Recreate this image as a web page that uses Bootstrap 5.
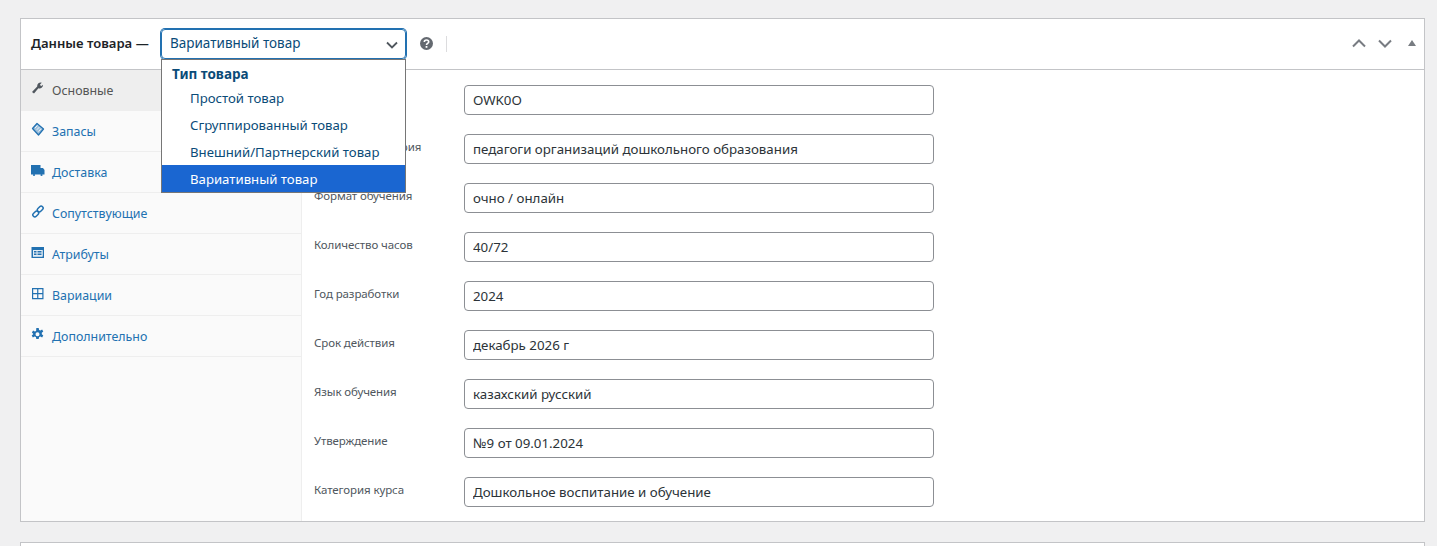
<!DOCTYPE html>
<html lang="ru">
<head>
<meta charset="utf-8">
<title>Данные товара</title>
<link href="https://cdn.jsdelivr.net/npm/bootstrap@5.3.0/dist/css/bootstrap.min.css" rel="stylesheet">
<style>
html,body{height:546px;overflow:hidden}
body{background:#f0f0f1;font-family:"Noto Sans","Open Sans",sans-serif;font-size:13px;color:#3c434a;padding:18px 12px 0 20px}
.wc-panel{background:#fff;border:1px solid #c3c4c7;height:504px;position:relative}
.wc-head{height:51px;border-bottom:1px solid #c3c4c7;padding:0 10px}
.wc-title{font-weight:600;font-size:13.1px;color:#1d2327;width:130px;flex:none;margin-top:-1px}
.wc-select{width:245px;height:30px;flex:none;border:1px solid #2271b1;box-shadow:0 0 0 1px #2271b1;border-radius:4px;color:#0a4b78;padding:0 7px 0 8px;font-size:13.5px}
.wc-select span{margin-top:-1px}
.wc-select svg{margin-top:2px}
.wc-sep{width:1px;height:16px;background:#dcdcde;margin-left:13px}
.wc-help{margin-left:14px;margin-top:-2px}
.wc-drop{position:absolute;left:140px;top:40px;width:245px;height:134px;background:#fff;border:1px solid #767676;z-index:5;color:#0a4b78;font-size:13.2px}
.wc-group{font-weight:700;height:24px;padding:4px 10px 0;line-height:20px;font-size:13.5px}
.wc-opt{height:27px;line-height:29px;padding-left:28px}
.wc-opt.wc-on{background:#1a66d1;color:#fff}
.wc-body{height:451px}
.wc-tabs{width:281px;flex:none;background:#fafafa;border-right:1px solid #eee}
.wc-tab{height:41px;border-bottom:1px solid #eee;color:#2271b1;padding-left:10px;padding-top:3px;gap:7px;font-size:12.4px}
.wc-tab svg{flex:none;margin-top:-7px}
.wc-tab.wc-active{background:#eee;color:#555;border-bottom-color:#eee}
.wc-fields{padding:15px 0 0 12px}
.wc-row{height:49px}
.wc-label{width:150px;flex:none;font-size:11.5px;letter-spacing:-.1px;color:#50575e;padding-top:5px;line-height:16px}
.wc-input.form-control{width:470px;height:30px;min-height:30px;border:1px solid #8c8f94;border-radius:4px;padding:0 8px;font-size:13.3px;color:#2c3338;font-family:inherit;background:#fff;box-shadow:none;line-height:28px}
.wc-next{background:#fff;border:1px solid #c3c4c7;border-bottom:0;height:4px;margin-top:20px}
.wc-arrows{gap:12px;margin-left:auto;margin-top:-2px}
.wc-tri{margin-left:4px;margin-right:-2px}
</style>
</head>
<body>
<div class="wc-panel">
  <div class="wc-head d-flex align-items-center">
    <div class="wc-title">Данные товара —</div>
    <div class="wc-select d-flex align-items-center justify-content-between">
      <span>Вариативный товар</span>
      <svg width="12" height="8" viewBox="0 0 12 8"><path d="M1 1.500l5 5 5-5" fill="none" stroke="#50575e" stroke-width="1.800"/></svg>
    </div>
    <svg class="wc-help" width="13" height="13" viewBox="0 0 13 13"><circle cx="6.500" cy="6.500" r="6.500" fill="#646970"/><path d="M4.300 5a2.200 2 0 0 1 4.400 0c0 1.400-2.200 1.500-2.200 2.900" fill="none" stroke="#fff" stroke-width="1.600"/><rect x="5.600" y="9" width="1.800" height="1.800" fill="#fff"/></svg>
    <div class="wc-sep"></div>
    <div class="wc-arrows d-flex align-items-center">
      <svg width="14" height="9" viewBox="0 0 14 9"><path d="M1 7.500l6-6 6 6" fill="none" stroke="#787c82" stroke-width="2"/></svg>
      <svg width="14" height="9" viewBox="0 0 14 9"><path d="M1 1.500l6 6 6-6" fill="none" stroke="#787c82" stroke-width="2"/></svg>
      <svg class="wc-tri" width="8" height="6" viewBox="0 0 8 6"><path d="M4 0l4 6H0z" fill="#787c82"/></svg>
    </div>
  </div>
  <div class="wc-drop">
    <div class="wc-group">Тип товара</div>
    <div class="wc-opt">Простой товар</div>
    <div class="wc-opt">Сгруппированный товар</div>
    <div class="wc-opt">Внешний/Партнерский товар</div>
    <div class="wc-opt wc-on">Вариативный товар</div>
  </div>
  <div class="wc-body d-flex">
    <div class="wc-tabs">
      <div class="wc-tab wc-active d-flex align-items-center">
        <svg width="14" height="14" viewBox="0 0 14 14"><path d="M1 11l5.200-5.500a3.400 3.400 0 0 1 4.600-3.700L9 3.500l1 1.700 2-1.400a3.400 3.400 0 0 1-4.600 3.400L3 12.500z" fill="#50575e"/></svg>
        <span>Основные</span>
      </div>
      <div class="wc-tab d-flex align-items-center">
        <svg width="14" height="14" viewBox="0 0 14 14"><path d="M1.500 6.500L6 1.500l6.500 5.500-5 6z" fill="#9dc0dc" stroke="#2271b1" stroke-width="1.300" stroke-linejoin="round"/><path d="M4 6l2.500-2.500M5.800 7.800l2.500-2.700M7.500 9.500l2.500-2.700" stroke="#fff" stroke-width=".8"/></svg>
        <span>Запасы</span>
      </div>
      <div class="wc-tab d-flex align-items-center">
        <svg width="14" height="14" viewBox="0 0 14 14"><path d="M0 2h9.500v9.500H0zM9.500 5H12l1.500 2v4.500h-4z" fill="#2271b1"/><circle cx="3" cy="12" r="1.100" fill="#2271b1"/><circle cx="10.500" cy="12" r="1.100" fill="#2271b1"/></svg>
        <span>Доставка</span>
      </div>
      <div class="wc-tab d-flex align-items-center">
        <svg width="14" height="14" viewBox="0 0 14 14"><g fill="none" stroke="#2271b1" stroke-width="1.500"><rect x="6" y="3" width="6.500" height="4" rx="2" transform="rotate(-45 9.200 5)"/><rect x="1.500" y="8" width="6.500" height="4" rx="2" transform="rotate(-45 4.700 10)"/></g></svg>
        <span>Сопутствующие</span>
      </div>
      <div class="wc-tab d-flex align-items-center">
        <svg width="14" height="14" viewBox="0 0 14 14"><path fill-rule="evenodd" d="M0.500 2h12.500v11H0.500zM2 5v6.500h9.500V5z" fill="#2271b1"/><path d="M2 5h9.500v6.500H2z" fill="#e3edf5"/><path d="M3 6h2.500v1.500H3zM6.500 6h4v1.500h-4zM3 8.500h2.500V10H3zM6.500 8.500h4V10h-4z" fill="#2271b1"/></svg>
        <span>Атрибуты</span>
      </div>
      <div class="wc-tab d-flex align-items-center">
        <svg width="14" height="14" viewBox="0 0 14 14"><path d="M1.600 2.600h10.300v10H1.600zM6.750 2.600v10M1.600 7.600h10.300" fill="none" stroke="#2271b1" stroke-width="1.200"/></svg>
        <span>Вариации</span>
      </div>
      <div class="wc-tab d-flex align-items-center">
        <svg width="14" height="14" viewBox="0 0 14 14"><path fill-rule="evenodd" d="M5.300 1h2.400l.4 1.900 1.300.6 1.700-1 1.200 2-1.500 1.300v1.400l1.500 1.300-1.200 2-1.700-1-1.300.6-.4 1.900H5.300l-.4-1.900-1.300-.6-1.700 1-1.200-2 1.500-1.300V6.800L.9 5.500l1.200-2 1.700 1 1.300-.6zM6.500 5.200a2 2 0 1 0 0 4 2 2 0 0 0 0-4z" fill="#2271b1"/></svg>
        <span>Дополнительно</span>
      </div>
    </div>
    <div class="wc-fields flex-grow-1">
      <div class="wc-row d-flex"><div class="wc-label"></div><input class="wc-input form-control" value="OWK0O"></div>
      <div class="wc-row d-flex"><div class="wc-label">Целевая аудитория</div><input class="wc-input form-control" value="педагоги организаций дошкольного образования"></div>
      <div class="wc-row d-flex"><div class="wc-label">Формат обучения</div><input class="wc-input form-control" value="очно / онлайн"></div>
      <div class="wc-row d-flex"><div class="wc-label">Количество часов</div><input class="wc-input form-control" value="40/72"></div>
      <div class="wc-row d-flex"><div class="wc-label">Год разработки</div><input class="wc-input form-control" value="2024"></div>
      <div class="wc-row d-flex"><div class="wc-label">Срок действия</div><input class="wc-input form-control" value="декабрь 2026 г"></div>
      <div class="wc-row d-flex"><div class="wc-label">Язык обучения</div><input class="wc-input form-control" value="казахский русский"></div>
      <div class="wc-row d-flex"><div class="wc-label">Утверждение</div><input class="wc-input form-control" value="№9 от 09.01.2024"></div>
      <div class="wc-row d-flex"><div class="wc-label">Категория курса</div><input class="wc-input form-control" value="Дошкольное воспитание и обучение"></div>
    </div>
  </div>
</div>
<div class="wc-next"></div>
<script src="https://cdn.jsdelivr.net/npm/bootstrap@5.3.0/dist/js/bootstrap.bundle.min.js"></script>
</body>
</html>
